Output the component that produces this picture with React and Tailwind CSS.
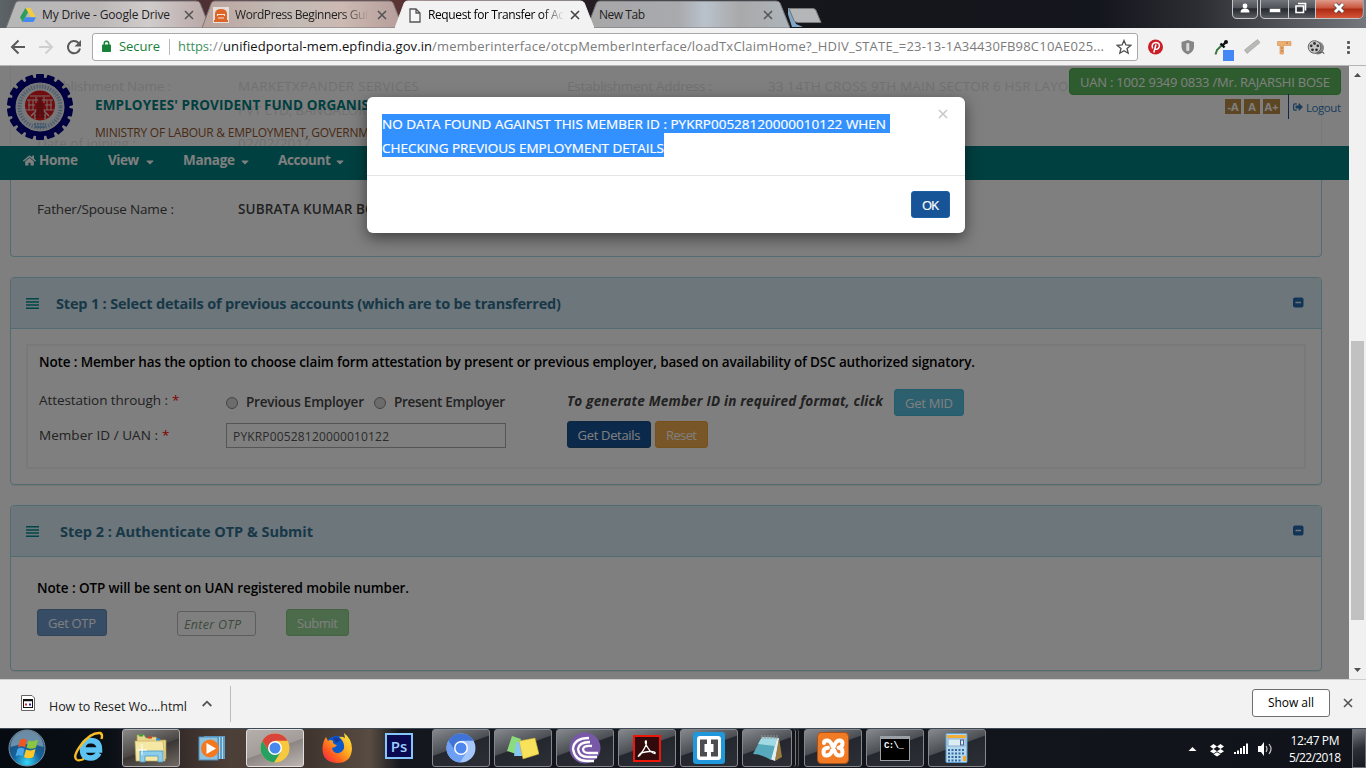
import { useLayoutEffect, useRef } from "react";
import { FaHome, FaSignOutAlt, FaCaretDown } from "react-icons/fa";

/* Single-line label whose tracking is computed so that it spans `w` pixels. */
function Fit({ w, children, className = "" }) {
  const ref = useRef(null);
  useLayoutEffect(() => {
    const el = ref.current;
    el.style.letterSpacing = "0px";
    const natural = el.getBoundingClientRect().width;
    const n = el.textContent.length;
    if (n > 1) {
      const ls = (w - natural) / (n - 1);
      el.style.letterSpacing = `${ls}px`;
      el.style.marginRight = `${-ls}px`;
    }
  }, [w, children]);
  return (
    <span ref={ref} className={`inline-block shrink-0 whitespace-pre ${className}`}>
      {children}
    </span>
  );
}

function Cross({ className = "" }) {
  return (
    <svg viewBox="0 0 10 10" className={`size-[10px] shrink-0 ${className}`}>
      <path d="M1 1L9 9M9 1L1 9" stroke="currentColor" strokeWidth="1.6" fill="none" />
    </svg>
  );
}

function Tab({ active, width, fill, className = "", children }) {
  return (
    <div className={`relative flex h-[28px] shrink-0 items-center ${width} ${active ? "z-10" : ""} ${className}`}>
      <svg viewBox="0 0 204 28" preserveAspectRatio="none" className="absolute inset-0 h-full w-full">
        <path d="M0 28L9.500 3Q10.500 1 13 1H190Q193 1 194 3L204 28Z" fill={fill} stroke={active ? "#f2f2f2" : "#77767a"} />
      </svg>
      <div className="relative flex h-full w-full items-center pt-[2px]">{children}</div>
    </div>
  );
}

function PageIcon() {
  return (
    <svg viewBox="0 0 12 15" className="h-[15px] w-[12px] shrink-0">
      <path d="M1 1H7L11 5V14H1Z M7 1V5H11" fill="#f7f7f7" stroke="#555" strokeWidth="1.3" />
    </svg>
  );
}

function TabStrip() {
  return (
    <div className="relative flex h-[28px] shrink-0 bg-[linear-gradient(90deg,#5d6468_0px,#4a4c50_40px,#4d3034_190px,#5b3333_400px,#241d24_590px,#15171c_700px,#14161d_1100px,#2c2e34_1200px,#74777c_1366px)] pl-[6px]">
      <Tab width="w-[204px]" fill="url(#tabA)">
        <svg viewBox="0 0 16 14" className="ml-[14px] h-[14px] w-[16px] shrink-0">
          <path d="M5.500 0H10.500L16 9.300H10.800Z" fill="#f5cb42" />
          <path d="M5.500 0L0 9.300L2.600 14L8 4.500Z" fill="#2e9e5b" />
          <path d="M5.200 9.300H16L13.400 14H2.600Z" fill="#4688f1" />
        </svg>
        <Fit w={128} className="ml-[6px] text-[12px] text-[#222]">My Drive - Google Drive</Fit>
        <Cross className="ml-[14px] text-[#555]" />
      </Tab>
      <Tab width="w-[201px]" fill="url(#tabB)" className="-ml-[8px]">
        <svg viewBox="0 0 16 16" className="ml-[11px] size-[16px] shrink-0">
          <rect width="16" height="16" fill="#e4dfdc" />
          <path d="M2 13V7Q2 2 8 2T14 7V13H15V15H1V13Z" fill="#dd6527" />
          <path d="M4.500 9V7.500H11.500V9M5 11H11" stroke="#f4e4da" strokeWidth="1.100" fill="none" />
        </svg>
        <span className="ml-[6px] w-[134px] overflow-hidden whitespace-nowrap text-[12px] text-[#222] [mask-image:linear-gradient(90deg,#000_80%,transparent)]">
          <Fit w={133}>WordPress Beginners Gui</Fit>
        </span>
        <Cross className="ml-[8px] text-[#555]" />
      </Tab>
      <Tab active width="w-[199px]" fill="#f2f2f2" className="-ml-[8px]">
        <span className="ml-[14px] flex"><PageIcon /></span>
        <span className="ml-[7px] w-[136px] overflow-hidden whitespace-nowrap text-[12px] text-black [mask-image:linear-gradient(90deg,#000_84%,transparent)]">
          <Fit w={136}>Request for Transfer of Ac</Fit>
        </span>
        <Cross className="ml-[6px] text-[#444]" />
      </Tab>
      <Tab width="w-[203px]" fill="url(#tabC)" className="-ml-[7px]">
        <Fit w={46} className="ml-[12px] text-[12px] text-[#222]">New Tab</Fit>
        <Cross className="ml-[118px] text-[#555]" />
      </Tab>
      <svg viewBox="0 0 46 28" className="-ml-[2px] h-[28px] w-[46px] shrink-0">
        <path d="M-2 8L4 27H15L8 24L1 8Z" fill="#80a7c8" />
        <path d="M1 8.500H25Q27 8.500 28 10.500L33 22.500H10Q7 22.500 6 20.500Z" fill="#b5b6b8" stroke="#787878" />
      </svg>
      <svg className="absolute size-0">
        <defs>
          <linearGradient id="tabA">
            <stop offset="0" stopColor="#b6b7b8" /><stop offset=".45" stopColor="#bdb8b8" />
            <stop offset=".7" stopColor="#d0cccc" /><stop offset="1" stopColor="#b8a6a4" />
          </linearGradient>
          <linearGradient id="tabB">
            <stop offset="0" stopColor="#bba49e" /><stop offset=".4" stopColor="#c2bab5" />
            <stop offset=".7" stopColor="#ccb9b2" /><stop offset="1" stopColor="#b59c99" />
          </linearGradient>
          <linearGradient id="tabC">
            <stop offset="0" stopColor="#a7a7a8" /><stop offset=".45" stopColor="#a9aaad" />
            <stop offset=".58" stopColor="#b9c2cc" /><stop offset=".75" stopColor="#a9a9aa" />
            <stop offset="1" stopColor="#adb5ba" />
          </linearGradient>
        </defs>
      </svg>
      <svg viewBox="0 0 132 20" className="absolute left-[1232px] top-0 h-[20px] w-[132px]">
        <defs>
          <linearGradient id="winb" x2="0" y2="1">
            <stop offset="0" stopColor="#76797e" /><stop offset=".45" stopColor="#50545a" />
            <stop offset=".5" stopColor="#25282e" /><stop offset="1" stopColor="#5a5d62" />
          </linearGradient>
          <linearGradient id="winr" x2="0" y2="1">
            <stop offset="0" stopColor="#df9a8a" /><stop offset=".45" stopColor="#c9543c" />
            <stop offset=".5" stopColor="#ad2a12" /><stop offset="1" stopColor="#d4553a" />
          </linearGradient>
        </defs>
        <path d="M.5 -1V14Q.5 18.500 5 18.500H21Q25.500 18.500 25.500 14V-1Z" fill="url(#winb)" stroke="#c5c6c8" />
        <path d="M28.500 -1V14Q28.500 18.500 33 18.500H126Q131 18.500 131 14V-1Z" fill="url(#winb)" stroke="#c5c6c8" />
        <path d="M84 0H130.500V14Q130.500 18 126 18H84Z" fill="url(#winr)" />
        <path d="M56.500 0V18M83.500 0V18" stroke="#c5c6c8" />
        <circle cx="13" cy="6" r="2.400" fill="#fff" />
        <path d="M8.500 12.500Q8.500 8.500 13 8.500T17.500 12.500Z" fill="#fff" />
        <rect x="37.500" y="8.500" width="11" height="4" fill="#fff" stroke="#444" strokeWidth=".6" />
        <path d="M66 3.500H73.500V10.500M64 6H71.500V12.500H64Z" fill="none" stroke="#fff" strokeWidth="1.600" />
        <path d="M103 4L111 12M111 4L103 12" stroke="#444" strokeWidth="4.500" />
        <path d="M103 4L111 12M111 4L103 12" stroke="#fff" strokeWidth="3" />
      </svg>
    </div>
  );
}

function Toolbar() {
  return (
    <div className="flex h-[38px] shrink-0 items-center border-b border-[#b6b4b6] bg-[#f2f2f2]">
      <svg viewBox="0 0 92 37" className="h-[37px] w-[92px] shrink-0" fill="none" strokeWidth="2">
        <path d="M25 19H12.500M18.500 12.500L12 19L18.500 25.500" stroke="#5a5a5a" />
        <path d="M39 19H51.500M45.500 12.500L52 19L45.500 25.500" stroke="#cfcfcf" />
        <path d="M78.500 15A6.100 6.100 0 1 0 80 20.500" stroke="#5a5a5a" />
        <path d="M81 12V18.500H74.500Z" fill="#5a5a5a" />
      </svg>
      <div className="mt-px flex h-[28px] w-[1046px] shrink-0 items-center rounded-[3px] border border-[#a9a9a9] bg-white pl-[9px]">
        <svg viewBox="0 0 9 12" className="-mt-[2px] h-[12px] w-[9px] shrink-0">
          <path d="M2.200 5V3.500A2.300 2.300 0 0 1 6.800 3.500V5" fill="none" stroke="#188038" strokeWidth="1.400" />
          <rect y="4.500" width="9" height="7.500" rx=".8" fill="#188038" />
        </svg>
        <Fit w={41} className="ml-[8px] text-[13px] text-[#188038]">Secure</Fit>
        <span className="ml-[9px] h-[16px] w-px bg-[#b9b9b9]" />
        <div className="ml-[8px] flex text-[13px]">
          <Fit w={31} className="text-[#3f8f5e]">https</Fit>
          <Fit w={14} className="text-[#888]">://</Fit>
          <Fit w={209} className="text-[#111]">unifiedportal-mem.epfindia.gov.in</Fit>
          <Fit w={672} className="text-[#7b7b7b]">/memberinterface/otcpMemberInterface/loadTxClaimHome?_HDIV_STATE_=23-13-1A34430FB98C10AE025...</Fit>
        </div>
        <svg viewBox="0 0 16 16" className="ml-[12px] size-[16px] shrink-0">
          <path d="M8 1.500L9.900 6L14.700 6.400L11 9.500L12.200 14.200L8 11.700L3.800 14.200L5 9.500L1.300 6.400L6.100 6Z" fill="none" stroke="#4f4f4f" strokeWidth="1.300" />
        </svg>
      </div>
      <svg viewBox="1138 28 228 37" className="h-[37px] w-[228px] shrink-0">
        <circle cx="1155.500" cy="47" r="7.500" fill="#cb1f27" />
        <path d="M1153.800 52.500L1156 44.500M1152.600 48.500Q1150.800 43 1156 42.600Q1160 42.900 1159.300 46.500Q1158.200 50.200 1155.300 49" fill="none" stroke="#fff" strokeWidth="1.500" />
        <path d="M1187.800 40L1194 42V47Q1194 51.500 1187.800 54.500Q1181.500 51.500 1181.500 47V42Z" fill="#858585" />
        <rect x="1186.300" y="43" width="3" height="8" rx="1" fill="#dadada" />
        <path d="M1215.500 54.500L1217 50L1222 45" stroke="#3d7540" strokeWidth="2" fill="none" />
        <path d="M1220.500 43.500L1224.500 47.500M1222 46L1226 42" stroke="#111" strokeWidth="2.400" />
        <circle cx="1226" cy="42" r="2" fill="#111" />
        <rect x="1223" y="50" width="11" height="11" fill="#4386f5" />
        <path d="M1244.500 50L1257.500 39.500L1260 42.500L1247 53.500Z" fill="#b9bab5" stroke="#999a96" strokeWidth=".6" />
        <path d="M1277.500 41.500H1291V45.500H1283.500V54H1280V45.500H1277.500Z" fill="#eeae72" stroke="#d48f52" strokeWidth=".6" />
        <path d="M1281 48H1283M1281 51H1283M1287 42V44" stroke="#a86e3a" />
        <ellipse cx="1318" cy="48" rx="6" ry="6.500" fill="#858585" />
        <circle cx="1314.500" cy="47" r="6.300" fill="#c7c7c7" stroke="#666" />
        <g fill="#333"><circle cx="1314.500" cy="43.500" r="1.400" /><circle cx="1311.200" cy="45.800" r="1.400" /><circle cx="1312.500" cy="49.800" r="1.400" /><circle cx="1316.500" cy="49.800" r="1.400" /><circle cx="1317.800" cy="45.800" r="1.400" /></g>
        <path d="M1317 53L1323 52L1324 54" stroke="#555" fill="none" />
        <g fill="#5a5a5a"><rect x="1347" y="41" width="3" height="3" rx="1" /><rect x="1347" y="46" width="3" height="3" rx="1" /><rect x="1347" y="51" width="3" height="3" rx="1" /></g>
      </svg>
    </div>
  );
}

const teeth = Array.from({ length: 18 }, (_, i) => i * 20);

function Emblem() {
  return (
    <svg viewBox="0 0 66 66" className="h-[66px] w-[66px]">
      {teeth.map((a) => (
        <rect key={a} x="29" y="0" width="8" height="8" rx="1" fill="#000080" transform={`rotate(${a} 33 33)`} />
      ))}
      <circle cx="33" cy="33" r="27" fill="#f1f1f3" stroke="#000080" strokeWidth="5" />
      <circle cx="33" cy="33" r="20.500" fill="none" stroke="#7fafdc" strokeWidth="4" strokeDasharray="1.400 1.400" strokeOpacity=".8" />
      <circle cx="33" cy="31.500" r="15" fill="#e21a1e" />
      <g stroke="#f0d8d8" fill="none" strokeWidth="1">
        <path d="M20 26H46M19 36H47M23 22H43M22 26V36M26 26V36M40 26V36M44 26V36M29 23V29M37 23V29M21 31H28M38 31H45" />
        <path d="M24 42L30 36M42 42L36 36M28 45V40M38 45V40" strokeWidth="1.500" />
      </g>
      <path d="M30 30Q31 27 33 27T36 30L37.500 44H34L33 38L32 44H28.500Z" fill="#b51a20" />
      <circle cx="33" cy="25.500" r="2" fill="#b51a20" />
      <path d="M27 50H39M28 53H38" stroke="#5fa0d4" strokeWidth="1.500" strokeDasharray="2 .8" />
    </svg>
  );
}

function SiteHeader() {
  return (
    <div className="relative h-[80px] shrink-0 overflow-hidden">
      <div className="absolute left-[10px] top-0 h-full w-[1312px] border-x border-[#f0f4f4] text-[13.5px] leading-[20px] text-[#e3e3e3]">
        <div className="absolute left-[26px] top-[10px] flex">
          <Fit w={134}>Establishment Name :</Fit>
          <Fit w={181} className="ml-[67px]">MARKETXPANDER SERVICES</Fit>
          <Fit w={145} className="ml-[148px]">Establishment Address :</Fit>
          <Fit w={318} className="ml-[56px]">33 14TH CROSS 9TH MAIN SECTOR 6 HSR LAYOUT</Fit>
        </div>
        <Fit w={136} className="absolute left-[227px] top-[34px]">PVT LTD, BANGALORE</Fit>
        <div className="absolute left-[26px] top-[67px] flex">
          <Fit w={99}>Date of joining :</Fit>
          <Fit w={73} className="ml-[102px]">02/02/2017</Fit>
        </div>
      </div>
      <div className="relative flex justify-between pl-[7px] pr-[8px]">
        <div className="flex">
          <div className="mt-[8px]"><Emblem /></div>
          <div className="ml-[22px] flex flex-col pt-[29px]">
            <div className="flex text-[13.5px] font-bold leading-[20px] text-[#008080]">
              <Fit w={274}>EMPLOYEES' PROVIDENT FUND ORGANIS</Fit><span>ATION, INDIA</span>
            </div>
            <div className="mt-[8px] flex text-[12px] leading-[20px] text-[#95552b]">
              <Fit w={274}>MINISTRY OF LABOUR &amp; EMPLOYMENT, GOVERNM</Fit><span>ENT OF INDIA</span>
            </div>
          </div>
        </div>
        <div className="flex flex-col items-end pt-[2px]">
          <div className="flex h-[27px] w-[272px] items-center rounded-[4px] border border-[#4cae4c] bg-[#5cb85c] pl-[10px] pt-[3px] text-[13px] text-white">
            <Fit w={250}>UAN : 1002 9349 0833 /Mr. RAJARSHI BOSE</Fit>
          </div>
          <div className="-mt-px flex h-[25px] items-center text-[11px]">
            <div className="flex gap-[3px] font-bold text-white">
              <span className="h-[15px] w-[16px] bg-[#b98d46] text-center leading-[15px]">-A</span>
              <span className="h-[15px] w-[16px] bg-[#b98d46] text-center leading-[15px]">A</span>
              <span className="h-[15px] w-[17px] bg-[#b98d46] text-center leading-[15px]">A+</span>
            </div>
            <span className="ml-[8px] h-full w-px bg-[#294b98]" />
            <FaSignOutAlt className="ml-[4px] mt-px text-[10px] text-[#337ab7]" />
            <Fit w={35} className="ml-[3px] mt-[2px] text-[11.5px] text-[#337ab7]">Logout</Fit>
          </div>
        </div>
      </div>
    </div>
  );
}

function SiteNav() {
  return (
    <nav className="flex h-[34px] shrink-0 items-center bg-[#008080] pb-[5px] pl-[23px] text-[13.5px] font-bold text-white">
      <FaHome className="text-[13px]" />
      <Fit w={39} className="ml-[3px]">Home</Fit>
      <Fit w={31} className="ml-[30px]">View</Fit>
      <FaCaretDown className="ml-[5px] mt-[3px] text-[12px]" />
      <Fit w={52} className="ml-[27px]">Manage</Fit>
      <FaCaretDown className="ml-[4px] mt-[3px] text-[12px]" />
      <Fit w={53} className="ml-[27px]">Account</Fit>
      <FaCaretDown className="ml-[3px] mt-[3px] text-[12px]" />
    </nav>
  );
}

function PanelHeading({ children, gap }) {
  return (
    <div className="flex h-[51px] items-center border-b border-[#a5dbe2] bg-[#d9edf7] pl-[15px] pr-[18px] text-[14.5px] font-bold text-[#31708f]">
      <svg viewBox="0 0 13 11" className="h-[11px] w-[13px] shrink-0">
        <path d="M0 .8H13M0 3.900H13M0 7.100H13M0 10.200H13" stroke="#008c8c" strokeWidth="1.500" />
      </svg>
      <span className={`flex pt-[2px] ${gap}`}>{children}</span>
      <svg viewBox="0 0 11 11" className="-mt-px ml-auto size-[11px] shrink-0 translate-x-px">
        <rect y=".5" width="10.500" height="10" rx="2" fill="#2568ad" />
        <path d="M2.500 5.500H8" stroke="#d9edf7" strokeWidth="1.600" />
      </svg>
    </div>
  );
}

const btn = "flex h-[27px] items-center justify-center rounded-[3px] border pt-[2px] text-[13px] text-white";
const panel = "w-[1312px] shrink-0 overflow-hidden rounded-[4px] border border-[#a5dbe2] shadow-[0_1px_1px_rgba(0,0,0,0.08)]";

function Page() {
  return (
    <div className="flex h-full w-[1349px] flex-col bg-white text-[13.5px] text-[#444]">
      <SiteHeader />
      <SiteNav />
      <div className="ml-[10px] flex h-[77px] w-[1312px] shrink-0 rounded-b-[4px] border border-t-0 border-[#a5dbe2] pl-[26px] leading-[58px]">
        <Fit w={137}>Father/Spouse Name :</Fit>
        <Fit w={153} className="ml-[64px] font-semibold text-[#444]">SUBRATA KUMAR BOSE</Fit>
      </div>

      <section className={`ml-[10px] mt-[20px] h-[208px] ${panel}`}>
        <PanelHeading gap="ml-[17px]">
          <Fit w={505}>Step 1 : Select details of previous accounts (which are to be transferred)</Fit>
        </PanelHeading>
        <div className="ml-[15px] mt-[15px] h-[125px] w-[1280px] border-2 border-[#f3f3f3] pl-[11px]">
          <div className="pt-[6px] font-semibold leading-[20px] text-black">
            <Fit w={936}>Note : Member has the option to choose claim form attestation by present or previous employer, based on availability of DSC authorized signatory.</Fit>
          </div>
          <div className="mt-[17px] flex h-[27px] items-center">
            <div className="-mt-[4px] flex w-[187px]">
              <Fit w={129}>Attestation through :</Fit>
              <span className="ml-[4px] text-[#f00]">*</span>
            </div>
            <span className="size-[12px] rounded-full border border-[#888] bg-[#d8d8d8]" />
            <Fit w={118} className="ml-[8px] font-semibold text-[#444]">Previous Employer</Fit>
            <span className="ml-[10px] size-[12px] rounded-full border border-[#888] bg-[#d8d8d8]" />
            <Fit w={111} className="ml-[8px] font-semibold text-[#444]">Present Employer</Fit>
            <Fit w={316} className="-mt-[2px] ml-[62px] font-bold italic text-[#444]">To generate Member ID in required format, click</Fit>
            <div className={`ml-[11px] w-[70px] border-[#46b8da] bg-[#5bc0de] ${btn}`}><Fit w={48}>Get MID</Fit></div>
          </div>
          <div className="mt-[5px] flex h-[27px] items-center">
            <div className="mt-[2px] flex w-[187px]">
              <Fit w={119}>Member ID / UAN :</Fit>
              <span className="ml-[4px] text-[#f00]">*</span>
            </div>
            <div className="mt-[2px] flex h-[25px] w-[280px] items-center border border-[#aaa] pl-[6px] pt-[2px] text-[12px] text-[#555]">
              <Fit w={156}>PYKRP00528120000010122</Fit>
            </div>
            <div className={`ml-[61px] w-[84px] border-[#204d74] bg-[#165397] ${btn}`}><Fit w={63}>Get Details</Fit></div>
            <div className={`ml-[4px] w-[53px] border-[#eea236] bg-[#f0ad4e] ${btn}`}><Fit w={31}>Reset</Fit></div>
          </div>
        </div>
      </section>

      <section className={`ml-[10px] mt-[20px] h-[166px] ${panel}`}>
        <PanelHeading gap="ml-[21px]">
          <Fit w={253}>Step 2 : Authenticate OTP &amp; Submit</Fit>
        </PanelHeading>
        <div className="pl-[26px] pt-[21px]">
          <div className="font-semibold leading-[20px] text-black">
            <Fit w={372}>Note : OTP will be sent on UAN registered mobile number.</Fit>
          </div>
          <div className="mt-[11px] flex h-[27px]">
            <div className={`w-[70px] border-[#6087b3] bg-[#6f99cb] ${btn}`}><Fit w={48}>Get OTP</Fit></div>
            <div className="ml-[70px] mt-[2px] flex h-[25px] w-[79px] items-center rounded-[3px] border border-[#bbb] pl-[6px] pt-[3px] text-[12.5px] italic text-[#7d947d]">
              <Fit w={57}>Enter OTP</Fit>
            </div>
            <div className={`ml-[30px] w-[63px] border-[#86c886] bg-[#97d797] ${btn}`}><Fit w={41}>Submit</Fit></div>
          </div>
        </div>
      </section>
    </div>
  );
}

function Modal() {
  return (
    <div className="absolute inset-y-0 left-0 w-[1349px] overflow-hidden bg-black/50 pl-[367px] pt-[31px]">
      <div className="h-[136px] w-[598px] rounded-[6px] bg-white shadow-[0_5px_15px_rgba(0,0,0,0.5)]">
        <div className="flex h-[79px] justify-between border-b border-[#e5e5e5] pl-[15px] pr-[17px] pt-[17px] text-[13.5px] font-medium text-white [-webkit-text-stroke:0.2px_#fff]">
          <div className="flex flex-col items-start">
            <div className="h-[19px] w-[508px] bg-[#3390ff] leading-[20px]">
              <Fit w={504}>NO DATA FOUND AGAINST THIS MEMBER ID : PYKRP00528120000010122 WHEN</Fit>
            </div>
            <div className="h-[24px] w-[282px] bg-[#3390ff] pt-[5px] leading-[20px]">
              <Fit w={282}>CHECKING PREVIOUS EMPLOYMENT DETAILS</Fit>
            </div>
          </div>
          <Cross className="-mt-[5px] text-[#c8c8c8]" />
        </div>
        <div className="flex justify-end pr-[15px] pt-[15px]">
          <div className="flex h-[27px] w-[39px] items-center justify-center rounded-[3px] border border-[#1c5fa5] bg-[#165397] pt-[2px] text-[13px] text-white [-webkit-text-stroke:0.2px_#fff]">
            <Fit w={17}>OK</Fit>
          </div>
        </div>
      </div>
    </div>
  );
}

function Scrollbar() {
  return (
    <div className="flex w-[17px] shrink-0 flex-col items-center bg-[#f1f1f1]">
      <svg viewBox="0 0 17 17" className="size-[17px]"><path d="M5 11L8.500 7L12 11Z" fill="#505050" /></svg>
      <div className="mt-[258px] h-[279px] w-[13px] bg-[#c1c1c1]" />
      <svg viewBox="0 0 17 17" className="mt-auto size-[17px]"><path d="M5 6L8.500 10L12 6Z" fill="#505050" /></svg>
    </div>
  );
}

function DownloadBar() {
  return (
    <div className="flex h-[49px] shrink-0 items-center border-t border-[#cfcfcf] bg-[#f2f2f2] pb-[2px] text-[12px] text-[#222]">
      <svg viewBox="0 0 14 16" className="ml-[21px] h-[16px] w-[14px]">
        <path d="M.5 .5H11L13.500 3V15.500H.5Z" fill="#fff" stroke="#666" />
        <rect x="2.500" y="4.500" width="9" height="8" fill="#fff" stroke="#111" />
        <path d="M2.500 5.500H11.500" stroke="#111" strokeWidth="1.500" />
        <path d="M4 9.500H6" stroke="#d22" strokeWidth="2" /><path d="M8 9.500H10" stroke="#22b" strokeWidth="2" />
      </svg>
      <Fit w={138} className="ml-[14px] mt-[8px] text-[12.5px]">How to Reset Wo....html</Fit>
      <svg viewBox="0 0 10 7" className="ml-[15px] mt-px h-[7px] w-[10px]"><path d="M.7 6L5 1.700L9.300 6" fill="none" stroke="#555" strokeWidth="1.800" /></svg>
      <span className="ml-[18px] mt-px h-[36px] w-px bg-[#bdbdbd]" />
      <div className="ml-auto mr-[13px] flex h-[28px] w-[78px] items-center justify-center rounded-[3px] border border-[#6f6f6f] bg-white text-black"><Fit w={46}>Show all</Fit></div>
      <Cross className="mr-[13px] text-[#555]" />
    </div>
  );
}

function ChromeMark({ red, green, yellow, blue }) {
  return (
    <svg viewBox="0 0 30 30" className="size-[30px]">
      <circle cx="15" cy="15" r="14.500" fill={yellow} />
      <path d="M2.400 7.800A14.500 14.500 0 0 0 14 29.500L21 18.500L15 21L9 18Z" fill={green} />
      <path d="M2.400 7.800A14.500 14.500 0 0 1 27.600 7.800H15L9 18Z" fill={red} />
      <circle cx="15" cy="15" r="7" fill="#fff" />
      <circle cx="15" cy="15" r="5.500" fill={blue} />
    </svg>
  );
}

function TaskButton({ width = "w-[58px]", tone = "dark", className = "", children }) {
  const bg =
    tone === "light"
      ? "border-[#e0e0e0] bg-[linear-gradient(160deg,#b5afac,#a39c9a_50%,#8c8583_52%,#bdb5b0)]"
      : tone === "mid"
        ? "border-[#b0b0b0] bg-[linear-gradient(160deg,#8a8886,#4a4745_50%,#3a3634_52%,#716a63)]"
        : "border-[#85878a] bg-[linear-gradient(160deg,#85888c,#4b4e53_45%,#24272d_47%,#2c2f35)]";
  return (
    <div className={`flex h-[38px] shrink-0 items-center justify-center rounded-[3px] border ${width} ${bg} ${className}`}>{children}</div>
  );
}

function Taskbar() {
  return (
    <div className="flex h-[40px] shrink-0 items-start overflow-hidden border-t border-[#3d4954] bg-[linear-gradient(90deg,#060b12_0px,#0a0f16_110px,#3b302c_190px,#4d4038_230px,#40362f_310px,#594c42_370px,#14171d_400px,#10141a_1366px)]">
      <svg viewBox="0 0 38 38" className="ml-[8px] size-[38px] shrink-0">
        <defs>
          <radialGradient id="orb" cx=".5" cy=".9" r=".85">
            <stop offset="0" stopColor="#35d7f6" /><stop offset=".45" stopColor="#15619f" /><stop offset="1" stopColor="#244864" />
          </radialGradient>
        </defs>
        <circle cx="19" cy="19" r="18" fill="url(#orb)" stroke="#7891a4" />
        <path d="M2.500 18A16.500 16.500 0 0 1 35.500 18Q19 12 2.500 18Z" fill="#9db8ca" opacity=".6" />
        <path d="M12 11Q15.500 8.500 19 11L17 18.500Q13.500 16 10 18.500Z" fill="#ee5722" />
        <path d="M20.500 11.500Q24.500 13.500 30 10.500L28 18.500Q23 21 18.500 18.500Z" fill="#8cc63f" />
        <path d="M9.500 20Q13 17.500 16.500 20L14.500 27.500Q11 25 7.500 27.500Z" fill="#4aa8e8" />
        <path d="M18 20.500Q22.500 22.500 27.500 20L25.500 28Q20.500 30.500 16 28Z" fill="#ffc828" />
      </svg>
      <svg viewBox="0 0 30 32" className="ml-[28px] mt-[2px] h-[32px] w-[30px] shrink-0">
        <path d="M25 22Q22 27 16.500 27Q8.500 27 8.500 18.500T16.500 9.500Q25.500 9.500 25.500 19H10" fill="none" stroke="#5dc3f2" strokeWidth="5.500" />
        <path d="M3 29Q-2 26 7 14Q17 1 26 2Q29 3 27.500 8" fill="none" stroke="#f8bd21" strokeWidth="2.400" />
        <path d="M3 29Q5 30 10 28" fill="none" stroke="#f8bd21" strokeWidth="2.400" />
      </svg>
      <TaskButton tone="mid" className="ml-[18px]">
        <svg viewBox="0 0 34 30" className="h-[30px] w-[34px]">
          <path d="M3 5V2H10L12 5H17V4H22L24 7H32V26H3Z" fill="#e9d88b" stroke="#a99548" strokeWidth=".7" />
          <path d="M5 2.500H9" stroke="#27a83a" strokeWidth="2" />
          <path d="M14 4.500H18" stroke="#d4432c" strokeWidth="2" />
          <path d="M1 8H29L31 28H2Z" fill="#f5e7a4" stroke="#c1aa60" strokeWidth=".7" />
          <path d="M22 6.500H26" stroke="#2a8fd6" strokeWidth="2" />
          <path d="M6 29V18H29V29H24V23H11V29Z" fill="#8ccdec" stroke="#4798c3" strokeWidth=".8" />
          <path d="M8 11V22M3 17H13" stroke="#fff" />
        </svg>
      </TaskButton>
      <svg viewBox="0 0 28 28" className="ml-[18px] mt-[6px] size-[28px] shrink-0">
        <rect x="6" y="1" width="21" height="23" fill="#5d9ac4" />
        <path d="M24.500 2V24M21.500 2V24" stroke="#b3d9ef" />
        <rect x="1" y="2" width="19" height="23" fill="#8fc1df" stroke="#4d8db6" />
        <circle cx="12" cy="13.500" r="9" fill="#f27920" />
        <path d="M8.500 8V19L18 13.500Z" fill="#fff" />
      </svg>
      <TaskButton tone="light" className="ml-[20px]"><ChromeMark red="#d9453a" green="#27a162" yellow="#f8c83f" blue="#4688ee" /></TaskButton>
      <svg viewBox="0 0 32 32" className="ml-[17px] mt-[3px] size-[32px] shrink-0">
        <defs><linearGradient id="ff" x1="1" x2="0" y2="1"><stop offset="0" stopColor="#fff04a" /><stop offset=".4" stopColor="#ffad20" /><stop offset=".7" stopColor="#ff5b21" /><stop offset="1" stopColor="#ec1b54" /></linearGradient></defs>
        <circle cx="16" cy="17" r="13" fill="#0b59cb" />
        <path d="M5 5L7 9Q9 7 12 9Q11 12 16 13Q14 16 11 16Q12 22 18 21Q24 19 23 13Q22 8 18 5Q21 4 24 6L23 1Q31 7 31 17Q30 31 16 31Q1 30 1.500 16Q2 9 5 5Z" fill="url(#ff)" />
        <path d="M12 6Q17 4 20 8L15 11Z" fill="#163a9e" />
      </svg>
      <div className="ml-[32px] mt-[4px] flex h-[26px] w-[28px] shrink-0 items-center justify-center border-2 border-[#86c5fb] bg-[#0a0a50] text-[15px] font-semibold text-[#9bd0ff]">Ps</div>
      <TaskButton className="ml-[19px]"><ChromeMark red="#3f73d6" green="#6da0f5" yellow="#a5c6fb" blue="#4d86ee" /></TaskButton>
      <TaskButton className="ml-[4px]">
        <svg viewBox="0 0 32 26" className="h-[26px] w-[32px]">
          <path d="M5 1L14 4L9 19L0 16Z" fill="#8bdc7b" /><path d="M9 7H21V21H7Z" fill="#84c7f3" />
          <path d="M12 6L28 3L32 19L16 24Z" fill="#f8e15b" stroke="#bfa534" strokeWidth=".5" />
        </svg>
      </TaskButton>
      <TaskButton className="ml-[4px]">
        <svg viewBox="0 0 32 32" className="size-[32px]">
          <circle cx="16" cy="16" r="15.500" fill="#7859a8" />
          <g fill="none" stroke="#fff" strokeWidth="2.300"><path d="M20 6Q5 6 4 17Q6 29 18 29H25" /><path d="M21 10Q10 10 9 17Q10 25 19 25H28" /><path d="M23 14Q15 13 14 17Q14 21 20 21H29" /></g>
        </svg>
      </TaskButton>
      <TaskButton className="ml-[4px]">
        <svg viewBox="0 0 28 27" className="h-[27px] w-[28px]">
          <rect x="1" y="1" width="26" height="25" fill="#310b0b" stroke="#ed1709" strokeWidth="2" />
          <path d="M6 20Q10 17 13 10Q14 5 12.500 6Q11.500 8 15 13Q18 18 22 18.500Q23 16 16 16.500Q8 17 6 20Q4 23 8 19Z" fill="none" stroke="#fff" strokeWidth="1.300" />
        </svg>
      </TaskButton>
      <TaskButton className="ml-[4px]">
        <svg viewBox="0 0 32 32" className="size-[32px]">
          <rect width="32" height="32" rx="3" fill="#2197dc" /><rect x="4" y="4" width="24" height="24" rx="3" fill="#fff" />
          <path d="M7 7.500H14V12H11.500V20H14V24.500H7ZM25 7.500H18V12H20.500V20H18V24.500H25Z" fill="#4b4d50" />
        </svg>
      </TaskButton>
      <TaskButton width="w-[50px]" className="ml-[4px]">
        <svg viewBox="0 0 32 30" className="h-[30px] w-[32px]">
          <path d="M28 5L31 24L24 28Z" fill="#9c7c3c" /><path d="M11 4L28 5L24 28L19 26Z" fill="#e4eef0" />
          <path d="M11 4L26 5L20 27Q10 21 2 21Z" fill="#56aabc" /><path d="M11 4L26 5L24 13L7 11Z" fill="#a2dae3" />
          <path d="M11 2V6M14 2V6M17 2V6M20 2V6M23 2V6M26 2V6" stroke="#949494" />
        </svg>
      </TaskButton>
      <span className="ml-px h-[38px] w-[3px] rounded-r border-r border-[#777]" />
      <span className="h-[38px] w-[3px] rounded-r border-r border-[#555]" />
      <TaskButton className="ml-[5px]">
        <svg viewBox="0 0 32 32" className="size-[32px]">
          <rect x=".5" y=".5" width="31" height="31" rx="4" fill="#f17a25" stroke="#a8511a" />
          <path d="M7 11Q7 8.500 10 8.500Q13 8.500 14.500 12L18 20Q19 23.500 22.500 23.500Q25.500 23.500 25.500 20Q25.500 16 21.500 15.800Q25.500 15 25.500 11.500Q25.500 8.500 22.500 8.500Q19.500 8.500 18 12L14.500 20Q13 23.500 9.500 23.500Q6.500 23.500 6.500 20Q6.500 16 11 15.800" fill="none" stroke="#fff" strokeWidth="4" strokeLinecap="round" strokeLinejoin="round" />
        </svg>
      </TaskButton>
      <TaskButton className="ml-[4px]">
        <div className="h-[25px] w-[30px] border border-t-[3px] border-[#9b9fa6] bg-black pl-[3px] pt-[3px] font-['Liberation_Mono'] text-[9px] font-bold leading-[9px] tracking-[-0.6px] text-white">C:\_</div>
      </TaskButton>
      <TaskButton className="ml-[4px]">
        <svg viewBox="0 0 24 30" className="h-[30px] w-[24px]">
          <rect x="1" y=".5" width="21" height="29" rx="1" fill="#b5d8f1" stroke="#5d9dca" />
          <rect x="2" y="2" width="19" height="3" fill="#f0ad37" /><rect x="3" y="6" width="17" height="7" fill="#dcecf7" stroke="#7299b4" strokeWidth=".7" />
          <rect x="15.500" y="7" width="3" height="5" fill="none" stroke="#435d8d" strokeWidth="1" />
          <path d="M3 17H20M3 20.500H20M3 24H17M3 27.500H17" stroke="#356a9b" strokeWidth="2" strokeDasharray="2 1.500" />
          <rect x="18" y="23" width="3" height="5" fill="#f5a623" />
        </svg>
      </TaskButton>
      <svg viewBox="1184 728 90 39" className="ml-auto h-[39px] w-[90px] shrink-0">
        <path d="M1188.500 750L1192.500 746L1196.500 750Z" fill="#fff" />
        <path d="M1213.500 743L1217 745.500L1213.500 748L1210 745.500ZM1220.500 743L1224 745.500L1220.500 748L1217 745.500ZM1213.500 748L1217 750.300L1213.500 752.500L1210 750.300ZM1220.500 748L1224 750.300L1220.500 752.500L1217 750.300ZM1213.500 753.300L1217 751.200L1220.500 753.300L1217 755.500Z" fill="#fff" />
        <path d="M1235 753V751M1238 753V749.500M1241 753V747M1244 753V745M1247 753V742.500" stroke="#fff" strokeWidth="2" />
        <path d="M1258 745H1261L1264 741V755L1261 751H1258Z" fill="#fff" />
        <path d="M1266 745Q1268 748 1266 751M1269 743Q1273 748 1269 753" fill="none" stroke="#c8c8c8" strokeWidth="1.200" />
      </svg>
      <div className="ml-[15px] mr-[11px] mt-[3px] flex w-[52px] shrink-0 flex-col items-center text-[12px] leading-[17px] text-white">
        <Fit w={49}>12:47 PM</Fit>
        <Fit w={52}>5/22/2018</Fit>
      </div>
      <div className="h-[39px] w-[14px] shrink-0 border border-[#6c7075] bg-[linear-gradient(160deg,#777b80,#2c3036_50%,#15191f)]" />
    </div>
  );
}

export default function App() {
  return (
    <div className="flex h-[768px] w-[1366px] flex-col overflow-hidden font-['Open_Sans','Noto_Sans',sans-serif]">
      <TabStrip />
      <Toolbar />
      <div className="relative flex h-[613px] shrink-0 overflow-hidden">
        <Page />
        <Scrollbar />
        <Modal />
      </div>
      <DownloadBar />
      <Taskbar />
    </div>
  );
}
